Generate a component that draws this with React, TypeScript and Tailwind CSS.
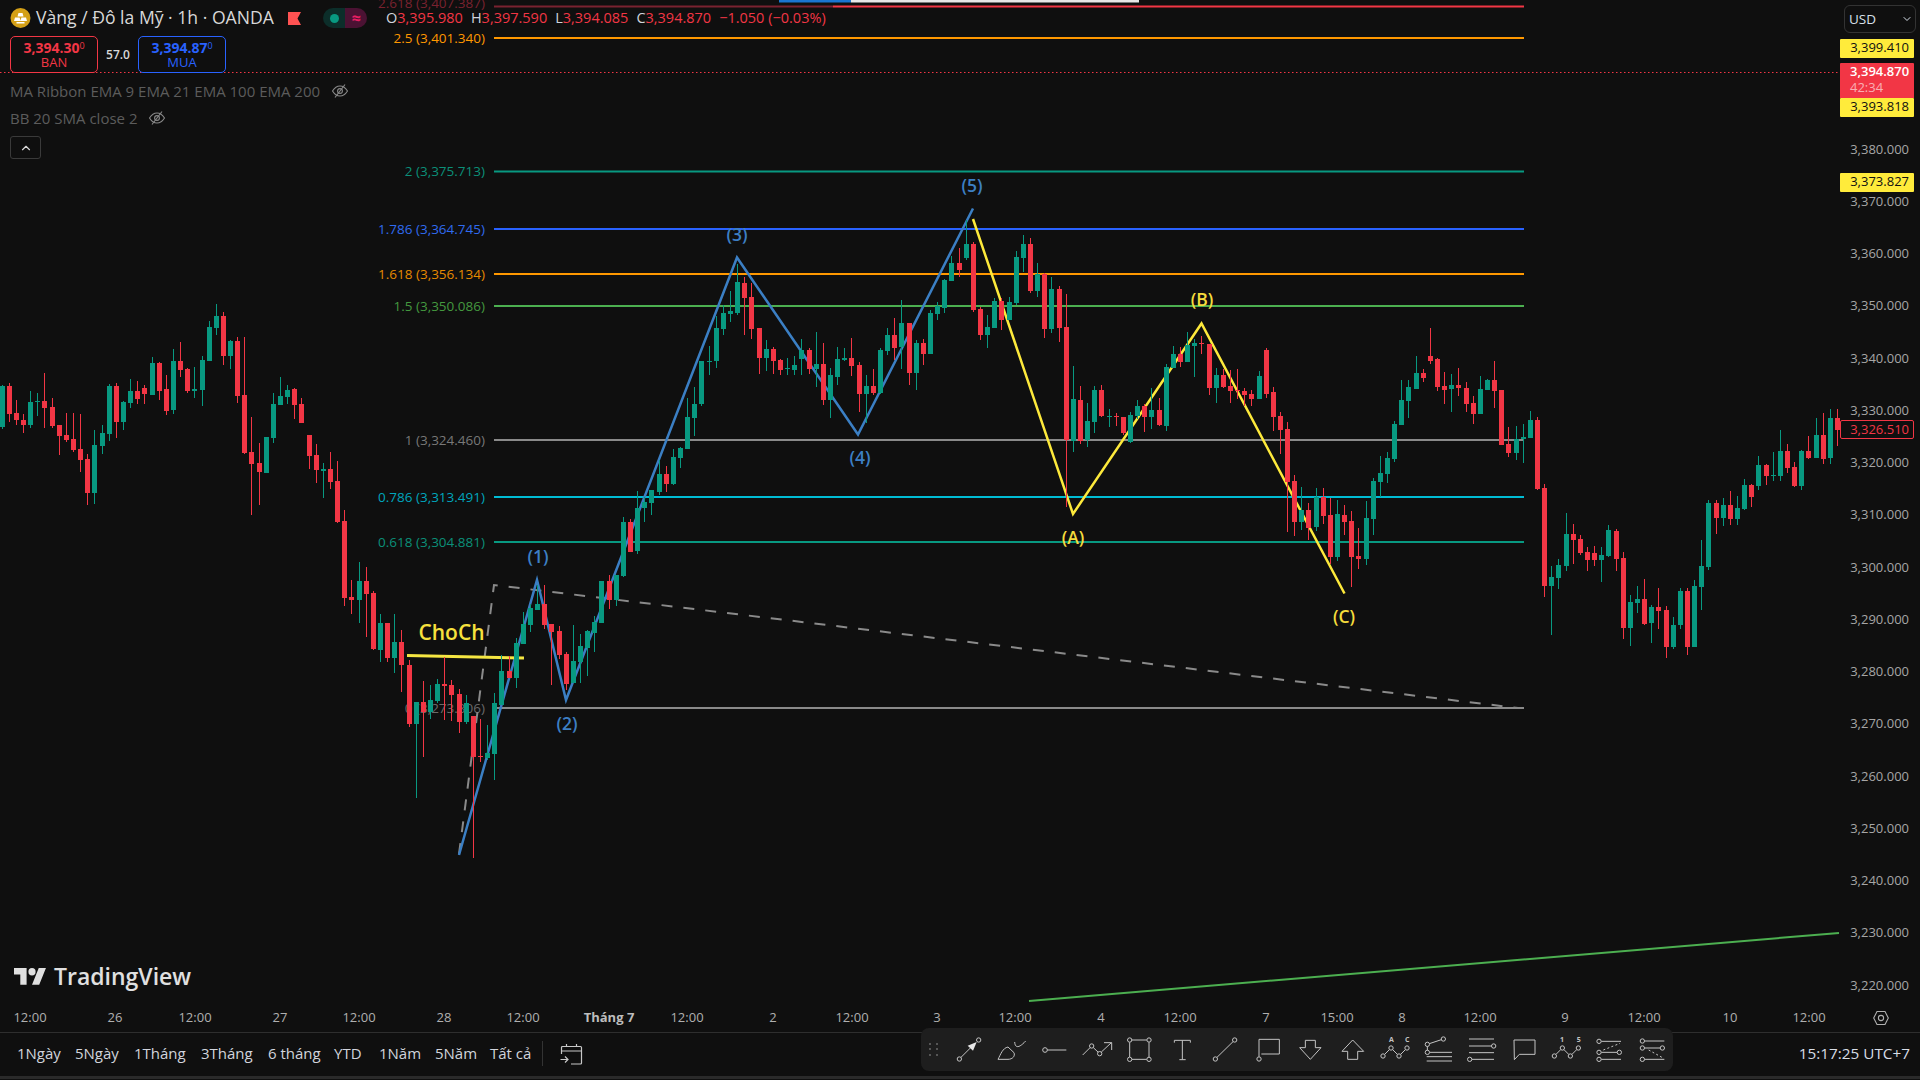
import React from "react";
import { ChevronDown, ChevronUp } from "lucide-react";

type Row = [number, number, number, number, number, number];
const G = 0, R = 1;
const mk = (ox: number, oy: number, rows: Row[]) =>
  rows.map(([x, c, wt, bt, bb, wb]) => ({
    x: Math.round(ox + x / 3),
    c,
    wt: oy + wt / 3,
    bt: Math.round(oy + bt / 3),
    bb: Math.round(oy + bb / 3),
    wb: oy + wb / 3,
  }));

const candles = [
  ...mk(0, 300, [
    [7,G,255,258,381,387],[28,R,250,258,342,366],[49,R,300,339,360,375],[70,R,342,360,375,399],[91,G,273,306,375,384],[112,G,279,303,306,348],[133,R,219,303,324,384],[157,R,294,321,378,384],[178,R,375,375,408,465],[199,R,339,405,420,426],[220,R,339,417,450,456],[241,R,342,447,480,516],[262,R,462,477,579,615],[283,G,390,435,579,612],[307,G,375,399,438,462],[328,G,252,258,402,423],[349,R,249,258,366,414],[370,G,303,306,366,390],[391,G,237,273,309,324],[412,R,243,273,297,312],[433,R,255,264,282,312],[457,G,171,189,285,285],[478,R,186,189,273,300],[499,R,225,267,333,345],[520,G,148,183,330,342],[541,R,126,183,210,231],[562,R,204,207,273,279],[583,G,201,267,273,294],[607,G,168,180,270,318],[628,G,63,81,183,183],[649,G,12,48,84,105],[670,R,36,48,168,195],[691,G,120,123,168,207],[712,R,111,123,288,309],[733,R,111,285,460,462],[754,R,351,456,492,645],[778,R,429,489,516,615],[799,G,411,411,519,519],[820,G,279,312,414,429],[841,G,231,288,315,315],[862,G,255,270,291,312],[883,R,264,267,315,357],[904,R,294,312,369,369],[928,R,405,405,468,507],[949,R,432,465,510,549],[970,G,489,507,513,594],[991,R,456,507,546,567],[1012,R,483,543,666,669],[1033,R,630,663,894,918],[1054,R,840,891,900,942],[1078,G,786,843,900,969],[1099,R,801,843,882,1010],[1120,R,873,879,1047,1050],
  ]),
  ...mk(380, 520, [
    [1,G,282,309,390,426],[22,R,309,309,414,426],[43,G,282,366,414,459],[64,R,330,366,435,516],[88,R,420,435,612,621],[109,G,546,546,612,834],[130,R,483,546,576,711],[151,G,495,540,576,597],[172,G,477,492,543,550],[193,R,411,492,498,600],[214,R,480,495,525,603],[238,R,507,522,606,639],[259,G,525,549,606,612],[280,R,588,588,711,1014],[301,R,597,708,711,726],[322,G,615,699,714,720],[343,G,519,549,702,780],[364,G,405,453,555,555],[388,R,408,453,474,474],[409,G,354,369,474,504],[430,G,276,312,372,372],[451,G,252,264,315,336],[472,G,195,252,270,270],[493,R,195,252,315,327],[514,R,312,312,336,495],[538,R,318,333,405,417],[559,R,396,402,492,510],[580,G,315,423,489,489],[601,G,342,378,426,489],[622,G,330,333,384,468],[643,G,288,306,339,396],[664,G,183,183,309,309],[688,R,165,183,240,267],[709,G,165,165,240,258],
  ]),
  ...mk(600, 420, [
    [70,G,291,306,468,471],[91,R,297,306,396,396],[112,G,213,264,393,402],[133,G,230,246,264,306],[154,G,210,210,248,285],
  ]),
  ...mk(640, 200, [
    [58,G,780,822,876,885],[79,R,798,822,852,876],[100,G,747,771,852,855],[121,G,741,744,774,804],[142,G,594,651,747,747],[163,G,561,612,654,708],[184,G,483,483,612,618],[208,G,438,483,485,525],[229,G,348,384,483,504],[250,G,315,339,387,405],[271,G,273,333,342,366],[292,G,192,246,339,345],[313,R,231,249,294,405],[334,R,249,291,387,417],[358,R,384,384,474,522],[379,G,420,447,474,513],[400,R,441,447,483,522],[421,R,477,480,510,525],[442,G,474,504,507,525],[463,G,468,495,510,525],[484,G,417,450,477,525],[508,R,444,450,507,522],[529,G,396,492,507,561],[550,R,429,492,600,615],[571,G,504,525,600,654],[592,G,441,477,531,555],[613,G,444,474,480,483],[634,R,414,474,498,528],[658,R,486,495,582,636],[679,G,525,558,582,669],[700,R,507,558,579,585],[721,G,444,450,579,582],[742,G,384,405,453,465],[763,R,354,405,444,480],[784,G,300,369,441,507],[808,R,369,369,519,555],[829,G,420,429,519,570],[850,R,417,429,462,495],[871,G,330,339,462,462],[892,G,306,318,342,360],[913,G,237,240,324,339],[934,G,168,189,243,243],[958,R,144,189,210,231],[979,G,60,132,174,180],[1000,R,126,132,330,336],[1021,R,321,327,405,420],[1042,G,345,381,405,444],[1063,G,294,303,384,384],[1084,R,294,303,360,390],[1108,G,291,306,360,360],[1129,G,153,171,309,315],[1150,G,105,132,174,216],[1171,R,114,132,273,279],[1192,G,189,222,273,291],[1213,R,219,222,387,414],[1234,G,231,267,387,399],[1258,R,258,267,384,426],[1279,R,282,381,720,920],[1300,G,498,597,723,756],[1321,R,558,600,723,732],[1342,G,609,663,720,741],[1363,G,558,570,666,699],[1384,R,555,570,648,651],[1408,G,627,648,651,681],[1429,R,639,648,651,678],
  ]),
  ...mk(1040, 280, [
    [250,R,411,411,459,465],[271,G,396,405,486,489],[292,G,360,378,408,417],[313,R,372,378,411,456],[334,G,324,390,411,447],[358,R,354,390,435,438],[379,G,252,261,438,453],[400,G,198,222,264,264],[421,R,201,222,246,261],[442,G,156,195,246,246],[463,G,177,189,198,291],[484,R,168,189,191,222],[508,R,192,192,324,345],[529,G,264,285,324,369],[550,R,267,285,321,324],[571,R,270,318,333,369],[592,R,267,330,332,357],[613,R,324,333,345,378],[634,R,330,342,357,378],[658,G,273,288,357,357],[679,R,204,210,342,354],[700,R,321,336,411,453],[721,R,396,408,450,522],[742,R,426,447,606,756],[763,R,585,603,726,768],[784,G,621,690,726,750],[805,R,669,690,744,780],[829,G,624,651,741,753],[850,R,624,651,708,732],[871,R,654,705,831,852],[892,G,660,702,831,843],[913,R,675,705,726,765],[934,R,693,723,831,921],[955,R,744,828,837,867],[979,G,663,714,837,855],[1000,G,594,603,717,765],[1021,G,528,579,606,651],[1042,G,516,534,582,609],[1063,G,423,432,537,546],[1084,G,300,360,435,435],[1105,G,300,321,363,414],[1129,G,228,279,327,327],[1150,R,267,279,294,306],[1171,R,144,228,243,252],[1192,R,234,237,321,333],[1213,R,276,318,330,372],[1234,G,282,315,327,396],[1255,R,264,315,324,348],[1279,R,306,324,372,396],[1300,R,348,369,402,432],[1321,G,288,327,402,402],[1342,G,297,300,330,330],[1363,R,243,300,333,384],[1384,R,330,330,495,495],[1405,R,441,492,519,531],[1429,G,438,478,519,540],
  ]),
  ...mk(1500, 300, [
    [70,G,372,411,417,489],[91,G,333,360,414,414],[112,R,351,360,567,570],[133,R,552,564,858,891],[154,G,798,831,858,1005],[175,G,777,795,834,867],[199,G,639,702,798,813],[220,R,672,702,720,792],[241,R,705,717,759,765],[262,R,741,756,780,813],[283,R,738,759,780,798],[304,G,741,765,780,846],[325,G,675,690,768,771],[349,R,687,693,777,813],[370,R,756,774,984,1017],[391,G,885,906,984,1038],[412,G,858,897,909,939],[433,R,837,897,972,975],[454,G,915,921,969,1029],[475,R,864,921,933,987],[499,R,918,930,1041,1074],[520,G,951,975,1041,1047],[541,G,864,873,975,987],[562,R,864,873,1041,1065],[583,G,840,858,1041,1041],[604,G,720,798,861,930],[625,G,600,609,801,810],[649,R,600,609,654,702],[670,G,594,615,654,678],[691,R,573,615,657,675],[712,G,588,624,657,675],[733,G,537,555,627,630],[754,R,552,555,591,621],[775,G,468,495,558,570],[799,R,492,495,528,555],[820,G,456,525,527,543],[841,G,390,453,528,543],[862,R,432,453,504,519],[883,R,486,501,558,561],[904,G,450,453,558,570],[925,R,408,453,474,477],[949,G,354,405,474,474],[970,R,339,405,477,492],[991,G,327,354,474,492],[1012,R,327,354,390,438],
  ]),
];

const fibs = [
  { y: 38, label: "2.5 (3,401.340)", line: "#ff9800", text: "#ff9800" },
  { y: 171.5, label: "2 (3,375.713)", line: "#089981", text: "#0b8f79" },
  { y: 229, label: "1.786 (3,364.745)", line: "#2962ff", text: "#2f6bf0" },
  { y: 274, label: "1.618 (3,356.134)", line: "#ff9800", text: "#e68a00" },
  { y: 306, label: "1.5 (3,350.086)", line: "#4caf50", text: "#44993f" },
  { y: 440, label: "1 (3,324.460)", line: "#8a8a8a", text: "#787878" },
  { y: 497, label: "0.786 (3,313.491)", line: "#00bcd4", text: "#00a5bd" },
  { y: 542, label: "0.618 (3,304.881)", line: "#089981", text: "#0b8f79" },
  { y: 708, label: "0 (3,273.306)", line: "#8a8a8a", text: "#6a6a6a" },
];

const waveLabels = [
  { x: 538, y: 557, t: "(1)", c: "#3d7fc4" },
  { x: 567, y: 724, t: "(2)", c: "#3d7fc4" },
  { x: 737, y: 235, t: "(3)", c: "#3d7fc4" },
  { x: 860, y: 458, t: "(4)", c: "#3d7fc4" },
  { x: 972, y: 186, t: "(5)", c: "#3d7fc4" },
  { x: 1073, y: 538, t: "(A)", c: "#f5dc3c" },
  { x: 1202, y: 300, t: "(B)", c: "#f5dc3c" },
  { x: 1344, y: 617, t: "(C)", c: "#f5dc3c" },
];

const ticks = [3380, 3370, 3360, 3350, 3340, 3330, 3320, 3310, 3300, 3290, 3280, 3270, 3260, 3250, 3240, 3230, 3220];

const times: [number, string, boolean?][] = [
  [30, "12:00"], [115, "26"], [195, "12:00"], [280, "27"], [359, "12:00"], [444, "28"], [523, "12:00"], [609, "Tháng 7", true], [687, "12:00"], [773, "2"], [852, "12:00"], [937, "3"], [1015, "12:00"], [1101, "4"], [1180, "12:00"], [1266, "7"], [1337, "15:00"], [1402, "8"], [1480, "12:00"], [1565, "9"], [1644, "12:00"], [1730, "10"], [1809, "12:00"],
];

const ranges: [string, string][] = [
  ["1Ngày", "w-[58px]"], ["5Ngày", "w-[59px]"], ["1Tháng", "w-[67px]"], ["3Tháng", "w-[67px]"], ["6 tháng", "w-[66px]"], ["YTD", "w-[45px]"], ["1Năm", "w-[56px]"], ["5Năm", "w-[55px]"], ["Tất cả", "w-[60px]"],
];

function EyeOff() {
  return (
    <svg width="18" height="18" viewBox="0 0 18 18" fill="none" stroke="#8a8a8a" strokeWidth="1.1">
      <path d="M1.5 9C4 5 6.5 4 9 4s5 1 7.5 5C14 13 11.5 14 9 14S4 13 1.5 9Z" />
      <circle cx="9" cy="9" r="2.4" />
      <path d="M14 2.5 4 15.5" />
    </svg>
  );
}

function Ico({ cx, children }: { cx: number; children: React.ReactNode }) {
  return (
    <svg className="w-[42.7px] h-[34px] shrink-0" viewBox={`${cx - 64} 21 128 102`} fill="none" stroke="#c4c4c4" strokeWidth="3">
      {children}
    </svg>
  );
}

const Dot = ({ x, y }: { x: number; y: number }) => <circle cx={x} cy={y} r="6.5" />;

function Toolbar() {
  return (
    <div className="absolute left-[921px] top-[-5px] w-[752px] h-[43px] flex items-center rounded-lg bg-[#1e1e1e]">
      <div className="w-[25.6px] shrink-0 flex justify-center">
        <svg width="10" height="14" viewBox="0 0 10 14" fill="#555">
          <rect x="0" y="0" width="2" height="2" /><rect x="7" y="0" width="2" height="2" />
          <rect x="0" y="5" width="2" height="2" /><rect x="7" y="5" width="2" height="2" />
          <rect x="0" y="11" width="2" height="2" /><rect x="7" y="11" width="2" height="2" />
        </svg>
      </div>
      <Ico cx={141}><Dot x={114} y={99} /><Dot x={172} y={42} /><path d="M119 94 150 63" /><path d="M166 48 139 59 155 74Z" fill="#e8e8e8" stroke="none" /></Ico>
      <Ico cx={269}><path d="M232 100H262C276 100 284 90 280 80L262 63C246 66 240 85 232 100Z" /><path d="M282 48C283 66 294 68 315 45" /></Ico>
      <Ico cx={397}><circle cx={372} cy={72} r="7" /><path d="M379 72H436" /></Ico>
      <Ico cx={525}><Dot x={511} y={60} /><Dot x={535} y={83} /><path d="M484 87 507 64M516 65 530 78M540 78 570 50M548 50H571V72" /></Ico>
      <Ico cx={653}><Dot x={627} y={42} /><Dot x={685} y={42} /><Dot x={627} y={100} /><Dot x={685} y={100} /><path d="M634 42H678M634 100H678M627 49V93M685 49V93" /></Ico>
      <Ico cx={781}><path d="M760 50V43H808V50M784 43V100M775 101H794" /></Ico>
      <Ico cx={909}><Dot x={882} y={99} /><Dot x={940} y={42} /><path d="M887 94 935 47" /></Ico>
      <Ico cx={1037}><Dot x={1015} y={99} /><path d="M1015 92V40H1076V84H1022" /></Ico>
      <Ico cx={44}><path d="M32 43H62V65H79L47 100 15 65H32Z" /></Ico>
      <Ico cx={172}><path d="M158 100H188V76H206L173 42 141 76H158Z" /></Ico>
      <Ico cx={300}>
        <Dot x={266} y={90} /><Dot x={290} y={66} /><Dot x={314} y={90} /><Dot x={338} y={66} />
        <path d="M271 85 285 71M295 71 309 85M319 85 333 71" />
        <text x={291} y={47} textAnchor="middle" fontSize="21" fontWeight="700" fill="#c4c4c4" stroke="none">A</text>
        <text x={339} y={47} textAnchor="middle" fontSize="21" fontWeight="700" fill="#c4c4c4" stroke="none">C</text>
      </Ico>
      <Ico cx={428}><Dot x={398} y={55} /><Dot x={446} y={39} /><Dot x={398} y={79} /><path d="M404 53 440 41M398 61V73M405 79H472M396 92H472M396 105H472" /></Ico>
      <Ico cx={556}><path d="M522 39H597M522 60H590M522 80H597M531 100H597" /><Dot x={596} y={60} /><Dot x={524} y={100} /></Ico>
      <Ico cx={684}><path d="M656 42H719V85H672L657 101Z" /></Ico>
      <Ico cx={812}>
        <Dot x={779} y={90} /><Dot x={803} y={66} /><Dot x={827} y={90} /><Dot x={851} y={66} />
        <path d="M784 85 798 71M808 71 822 85M832 85 846 71" />
        <text x={802} y={47} textAnchor="middle" fontSize="21" fontWeight="700" fill="#c4c4c4" stroke="none">1</text>
        <text x={852} y={47} textAnchor="middle" fontSize="21" fontWeight="700" fill="#c4c4c4" stroke="none">5</text>
      </Ico>
      <Ico cx={940}><Dot x={912} y={46} /><Dot x={912} y={79} /><Dot x={973} y={79} /><Dot x={912} y={100} /><path d="M919 46H978M919 79H966M919 100H978" /><path d="M925 72 975 52" strokeDasharray="6 7" /></Ico>
      <Ico cx={1068}><Dot x={1041} y={45} /><Dot x={1041} y={66} /><Dot x={1101} y={66} /><Dot x={1041} y={100} /><path d="M1048 45H1107M1048 66H1094M1048 100H1107" /><path d="M1060 72 1105 97" strokeDasharray="6 7" /></Ico>
    </div>
  );
}

function Chart() {
  return (
    <svg className="absolute inset-0 w-full h-full" viewBox="0 0 1840 1003">
      <rect x="779" y="0" width="72" height="2.5" fill="#1976d2" />
      <rect x="851" y="0" width="288" height="2.5" fill="#e8e8e8" />
      <path d="M494 6.5H833" stroke="#7a2230" strokeWidth="2" />
      <path d="M833 6.5H1524" stroke="#f23645" strokeWidth="2" />
      <text x="485" y="8" textAnchor="end" fontSize="13.5" fill="#7a2230">2.618 (3,407.387)</text>
      {fibs.map((f) => (
        <g key={f.label}>
          <path d={`M494 ${f.y}H1524`} stroke={f.line} strokeWidth="2" />
          <text x="485" y={f.y + 4.5} textAnchor="end" fontSize="13.5" fill={f.text}>{f.label}</text>
        </g>
      ))}
      <path d="M0 72.5H1840" stroke="#f23645" strokeWidth="1" strokeDasharray="1.5 2.5" />
      <path d="M459 854 494 585 1518 708" stroke="#8a8a8a" strokeWidth="2" strokeDasharray="11 11" fill="none" />
      <path d="M459 855 537 580 566 700 737 257.5 858 434.5 973 208.5" stroke="#3b7fc4" strokeWidth="2.5" fill="none" strokeLinejoin="miter" />
      <path d="M973 219 1073 514 1201.5 323.5 1344.5 593.5" stroke="#fde93b" strokeWidth="2.5" fill="none" />
      <path d="M407 655.5 524 658" stroke="#f5e642" strokeWidth="3" />
      <path d="M1029 1001 1839 933" stroke="#4caf50" strokeWidth="2" />
      <g shapeRendering="crispEdges">
        {candles.map((c, i) => {
          const fill = c.c === R ? "#f23645" : "#089981";
          return (
            <g key={i} fill={fill}>
              <rect x={c.x} y={c.wt} width="1" height={Math.max(c.wb - c.wt, 1)} />
              <rect x={c.x - 2} y={c.bt} width="5" height={Math.max(c.bb - c.bt, 1)} />
            </g>
          );
        })}
      </g>
      {waveLabels.map((w) => (
        <text key={w.t} x={w.x} y={w.y + 6} textAnchor="middle" fontSize="17.5" fontWeight="600" fill={w.c}>{w.t}</text>
      ))}
      <text x="451.5" y="640" textAnchor="middle" fontSize="21" fontWeight="600" fill="#f7e13d">ChoCh</text>
      <g transform="translate(14 964.3) scale(0.9 0.93)" fill="#e0e0e0">
        <path d="M14 22H7V11H0V4h14v18zM28 22h-8l7.5-18h8L28 22z" />
        <circle cx="20" cy="8" r="4" />
      </g>
      <text x="54" y="985" fontSize="23" fontWeight="600" fill="#e0e0e0">TradingView</text>
    </svg>
  );
}

function Legend() {
  return (
    <div className="absolute left-0 top-0 pl-[10px] pt-[8px] flex flex-col items-start">
      <div className="flex items-center h-[20px]">
        <svg width="21" height="20" viewBox="0 0 20 20" className="shrink-0">
          <circle cx="10" cy="10" r="10" fill="#d4a017" />
          <path d="M8 5h4l1 3.5H7ZM4.5 9.5h4.6l1 3.5H3.5ZM10.9 9.5h4.6l1 3.5h-6.6Z M6 14h8v1.5H6Z" fill="#fff" />
        </svg>
        <span className="ml-[5px] w-[252px] text-[17.6px] text-[#d8d8d8] leading-none whitespace-nowrap">Vàng / Đô la Mỹ · 1h · OANDA</span>
        <svg width="13" height="13" viewBox="0 0 13 13" className="shrink-0">
          <path d="M0 0H13L9.5 6.5 13 13H0Z" fill="#ff5252" />
        </svg>
        <div className="ml-[22px] w-[44px] h-[20px] flex rounded-[10px] overflow-hidden shrink-0">
          <div className="w-[22px] bg-[#0c2e2a] flex items-center justify-center">
            <div className="w-[9px] h-[9px] rounded-full bg-[#089981]" />
          </div>
          <div className="w-[22px] bg-[#4b1233] flex items-center justify-center text-[#e91e63] text-[16px] leading-none font-bold">≈</div>
        </div>
        <div className="ml-[19px] flex gap-[8px] text-[14.5px] leading-none whitespace-nowrap text-[#f23645]">
          <span><span className="text-[#d1d4dc]">O</span>3,395.980</span>
          <span><span className="text-[#d1d4dc]">H</span>3,397.590</span>
          <span><span className="text-[#d1d4dc]">L</span>3,394.085</span>
          <span><span className="text-[#d1d4dc]">C</span>3,394.870</span>
          <span>−1.050 (−0.03%)</span>
        </div>
      </div>
      <div className="flex items-center mt-[8px]">
        <div className="w-[88px] h-[37px] rounded-[5px] border border-[#f23645] flex flex-col items-center justify-center gap-[1px] text-[#f23645]">
          <span className="text-[14px] font-bold leading-none whitespace-nowrap">3,394.30<span className="text-[9px] align-[4px] font-normal">0</span></span>
          <span className="text-[13px] leading-none">BAN</span>
        </div>
        <span className="w-[40px] text-center text-[12px] font-semibold text-[#d8d8d8]">57.0</span>
        <div className="w-[88px] h-[37px] rounded-[5px] border border-[#2962ff] flex flex-col items-center justify-center gap-[1px] text-[#2962ff]">
          <span className="text-[14px] font-bold leading-none whitespace-nowrap">3,394.87<span className="text-[9px] align-[4px] font-normal">0</span></span>
          <span className="text-[13px] leading-none">MUA</span>
        </div>
      </div>
      <div className="flex items-center h-[18px] mt-[9px] text-[15px] text-[#5c5c5c] whitespace-nowrap">
        <span>MA Ribbon EMA 9 EMA 21 EMA 100 EMA 200</span>
        <span className="ml-[11px]"><EyeOff /></span>
      </div>
      <div className="flex items-center h-[18px] mt-[9px] text-[15px] text-[#5c5c5c] whitespace-nowrap">
        <span>BB 20 SMA close 2</span>
        <span className="ml-[11px]"><EyeOff /></span>
      </div>
      <button className="mt-[9px] w-[31px] h-[23px] rounded-[3px] border border-[#3a3a3a] flex items-center justify-center text-[#d8d8d8]">
        <ChevronUp size={14} strokeWidth={2} />
      </button>
    </div>
  );
}

function Tag({ top, text }: { top: string; text: string }) {
  return (
    <div className={`${top} absolute left-0 w-[74px] h-[19px] bg-[#ffeb3b] rounded-[1px] flex items-center justify-end pr-[5px] pb-[2px] text-[13px] text-[#111] leading-none`}>
      {text}
    </div>
  );
}

function PriceAxis() {
  return (
    <div className="relative w-[80px] h-full text-[13px] text-[#a6a6a6]">
      <div className="absolute left-[4px] top-[5px] w-[72px] h-[28px] rounded-[6px] border border-[#333] flex items-center justify-between pl-[4px] pr-[2px] text-[13.5px] text-[#d8e0ea]">
        <span>USD</span>
        <ChevronDown size={12} />
      </div>
      {ticks.map((p) => (
        <div key={p} className="absolute right-[11px] -translate-y-1/2 leading-none" style={{ top: 148.5 + (3380 - p) * 5.225 }}>
          {`${String(p)[0]},${String(p).slice(1)}.000`}
        </div>
      ))}
      <Tag top="top-[39px]" text="3,399.410" />
      <div className="absolute left-0 top-[63px] w-[74px] h-[35px] bg-[#f23645] rounded-t-[1px] flex flex-col pl-[10px] text-[13px] leading-[16px] text-white">
        <span className="font-semibold">3,394.870</span>
        <span className="text-white/60">42:34</span>
      </div>
      <Tag top="top-[98px]" text="3,393.818" />
      <Tag top="top-[173px]" text="3,373.827" />
      <div className="absolute left-0 top-[420px] w-[74px] h-[19px] rounded-[2px] border border-[#f23645] bg-[#0f0f0f] flex items-center justify-end pr-[4px] pb-[1px] text-[#f23645] leading-none">
        3,326.510
      </div>
    </div>
  );
}

export default function App() {
  return (
    <div className="w-[1920px] h-[1080px] flex flex-col overflow-hidden bg-[#0f0f0f] font-['Open_Sans',sans-serif]">
      <div className="flex h-[1003px] shrink-0">
        <div className="relative w-[1840px] h-full overflow-hidden">
          <Chart />
          <Legend />
        </div>
        <PriceAxis />
      </div>
      <div className="relative h-[29px] shrink-0 text-[13px] text-[#b0b0b0]">
        {times.map(([x, t, b], i) => (
          <span key={i} className={`absolute top-[7px] leading-[15px] -translate-x-1/2 whitespace-nowrap ${b ? "font-bold text-[#bdbdbd]" : ""}`} style={{ left: x }}>
            {t}
          </span>
        ))}
        <svg className="absolute left-[1873px] top-[7px]" width="16" height="16" viewBox="0 0 16 16" fill="none" stroke="#b0b0b0" strokeWidth="1.1">
          <path d="M0.7 8 4 1.5H12L15.3 8 12 14.5H4Z" />
          <circle cx="8" cy="8" r="2.6" />
        </svg>
      </div>
      <div className="relative h-[44px] shrink-0 border-t border-[#2e2e2e] flex items-center pl-[10px] pb-[2px] text-[15px] text-[#d1d4dc]">
        {ranges.map(([t, w]) => (
          <span key={t} className={`${w} whitespace-nowrap pl-[7px]`}>{t}</span>
        ))}
        <div className="ml-[-1px] w-px h-[25px] bg-[#333]" />
        <svg className="ml-[17px]" width="23" height="22" viewBox="0 0 23 22" fill="none" stroke="#c8c8c8" strokeWidth="1.2">
          <path d="M1.5 11V4.5A1 1 0 0 1 2.5 3.5H20.5A1 1 0 0 1 21.5 4.5V20A1 1 0 0 1 20.5 21H11" />
          <path d="M1.5 8H21.5M6.5 1V3.5M16.5 1V3.5" />
          <path d="M0.5 16.5H8M5 13.5 8 16.5 5 19.5" />
        </svg>
        <span className="ml-auto mr-[10px] text-[15.3px] text-[#d8dde6]">15:17:25 UTC+7</span>
        <Toolbar />
      </div>
      <div className="h-[3px] shrink-0 bg-[#2a2a2a]" />
    </div>
  );
}
